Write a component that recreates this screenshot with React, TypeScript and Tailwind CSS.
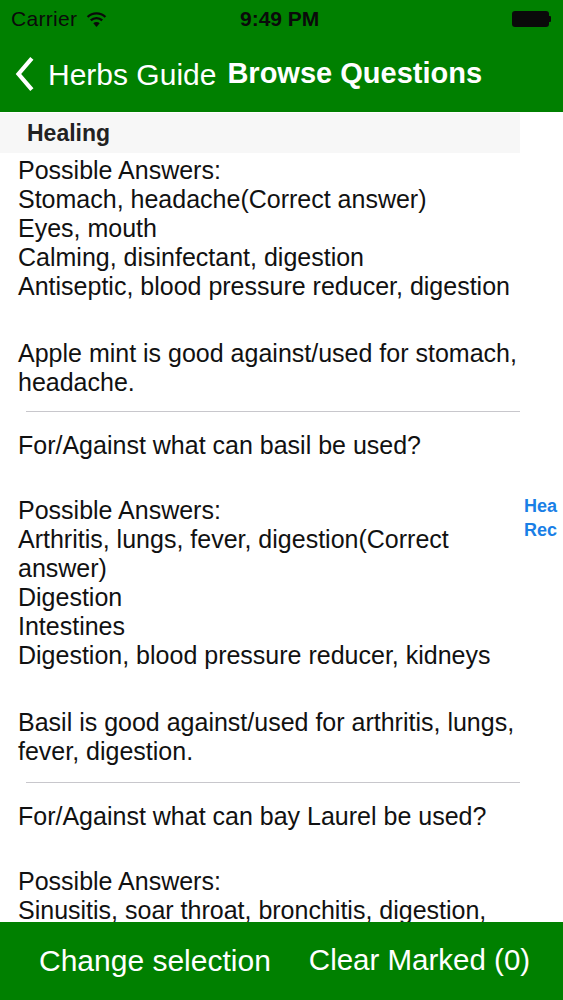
import React from "react";

type Question = {
  question?: string;
  answers: string[];
  explanation: string[];
};

const questions: Question[] = [
  {
    answers: [
      "Stomach, headache(Correct answer)",
      "Eyes, mouth",
      "Calming, disinfectant, digestion",
      "Antiseptic, blood pressure reducer, digestion",
    ],
    explanation: ["Apple mint is good against/used for stomach,", "headache."],
  },
  {
    question: "For/Against what can basil be used?",
    answers: [
      "Arthritis, lungs, fever, digestion(Correct",
      "answer)",
      "Digestion",
      "Intestines",
      "Digestion, blood pressure reducer, kidneys",
    ],
    explanation: ["Basil is good against/used for arthritis, lungs,", "fever, digestion."],
  },
  {
    question: "For/Against what can bay Laurel be used?",
    answers: ["Sinusitis, soar throat, bronchitis, digestion,"],
    explanation: [],
  },
];

const Line = ({ children }: { children: React.ReactNode }) => (
  <div className="h-[29px] leading-[29px] whitespace-nowrap">{children}</div>
);

const App = () => {
  return (
    <div
      className="w-[563px] h-[1000px] overflow-hidden bg-white text-black flex flex-col"
      style={{ fontFamily: '"Liberation Sans", Arial, sans-serif' }}
    >
      {/* header */}
      <div className="bg-[#008000] h-[112px] shrink-0 flex flex-col">
        <div className="relative h-[38px] flex items-center pl-[11px] text-[21px] tracking-[0.3px] text-[#0a0a0a]">
          <span>Carrier</span>
          <svg className="ml-[9px]" width="21" height="17" viewBox="0 0 21 17">
            <path d="M10.5 16 L7.3 12.3 A4.6 4.6 0 0 1 13.7 12.3 Z" fill="#0a0a0a" />
            <path d="M4.8 9.4 A8.2 8.2 0 0 1 16.2 9.4" stroke="#0a0a0a" strokeWidth="2.4" fill="none" />
            <path d="M1.6 6 A12.8 12.8 0 0 1 19.4 6" stroke="#0a0a0a" strokeWidth="2.4" fill="none" />
          </svg>
          <span className="absolute left-[240px] font-bold text-[21px] tracking-normal">9:49 PM</span>
          <div className="ml-auto mr-[12px] flex items-center">
            <div className="w-[37px] h-[16px] bg-[#0a0a0a] rounded-[3px]" />
            <div className="w-[2px] h-[6px] bg-[#0a0a0a] rounded-r-[1px]" />
          </div>
        </div>
        <div className="flex-1 flex items-center text-white pb-[2px]">
          <svg className="ml-[14px]" width="20" height="34" viewBox="0 0 20 34">
            <path d="M16.5 3 L4.5 17 L16.5 31" stroke="#fff" strokeWidth="4.2" fill="none" strokeLinecap="square" />
          </svg>
          <span className="ml-[14px] text-[30px]">Herbs Guide</span>
          <span className="ml-[11px] text-[29px] font-bold">Browse Questions</span>
        </div>
      </div>

      {/* list */}
      <div className="relative flex-1 min-h-0 overflow-hidden">
        <div className="w-[520px] overflow-hidden text-[25px] text-[#111]">
          <div className="bg-[#f7f7f7] h-[40px] flex items-center pl-[27px] font-bold text-[23px] mt-[1px] text-[#222]">
            Healing
          </div>
          {questions.map((q, i) => (
            <div key={i}>
              {i > 0 && <div className="ml-[26px] h-[1px] bg-[#c8c7cc]" />}
              <div className={`pl-[18px] w-[560px] ${i === 0 ? "pt-[3px] pb-[14px]" : "pt-[19px] pb-[16px]"}`}>
                {q.question && (
                  <div className="mb-[36px]">
                    <Line>{q.question}</Line>
                  </div>
                )}
                <Line>Possible Answers:</Line>
                {q.answers.map((a, j) => (
                  <Line key={j}>{a}</Line>
                ))}
                {q.explanation.length > 0 && (
                  <div className="mt-[38px]">
                    {q.explanation.map((e, j) => (
                      <Line key={j}>{e}</Line>
                    ))}
                  </div>
                )}
              </div>
            </div>
          ))}
        </div>

        {/* section index */}
        <div className="absolute left-[524px] top-[382px] text-[#1a7fe6] font-bold text-[18px] leading-[24px]">
          <div>Hea</div>
          <div>Rec</div>
        </div>
      </div>

      {/* toolbar */}
      <div className="h-[78px] shrink-0 bg-[#008000] flex items-center text-white text-[30px] pb-[2px]">
        <span className="ml-[39px]">Change selection</span>
        <span className="ml-[38px] text-[29.5px]">Clear Marked (0)</span>
      </div>
    </div>
  );
};

export default App;
